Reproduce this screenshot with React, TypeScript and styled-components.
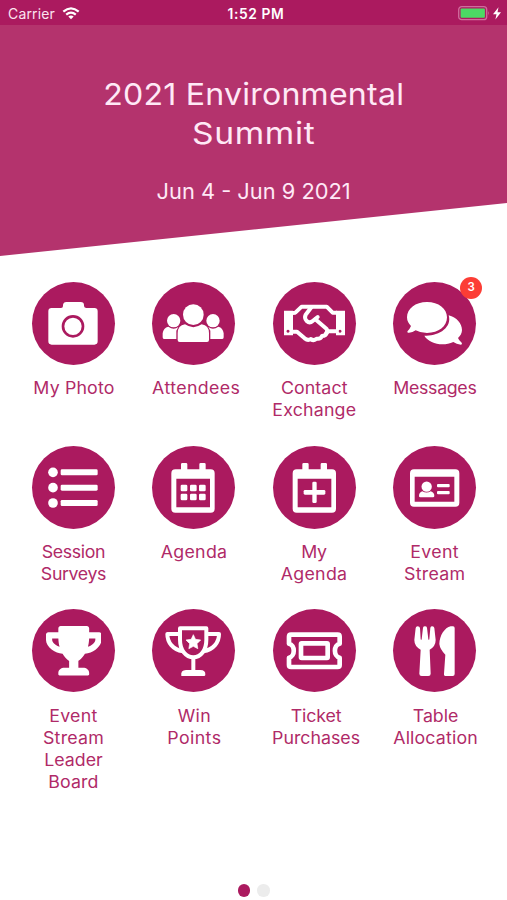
import React from "react";
import styled, { createGlobalStyle } from "styled-components";
import { FaTrophy } from "react-icons/fa";

const brand = "#ab1a5f";

const GlobalStyle = createGlobalStyle`
  * { box-sizing: border-box; }
  body { margin: 0; background: #fff; font-family: Inter, "Open Sans", sans-serif; }
`;

const Screen = styled.div`
  display: flex;
  flex-direction: column;
  width: 507px;
  height: 900px;
  overflow: hidden;
  background: #fff;
`;

const StatusBar = styled.header`
  display: grid;
  grid-template-columns: 1fr auto 1fr;
  align-items: center;
  height: 25px;
  padding: 2px 5px 0 8px;
  background: ${brand};
  color: #fbe4f0;
`;

const Carrier = styled.div`
  display: flex;
  align-items: center;
  gap: 7px;
  font-size: 14px;
  letter-spacing: 0.15px;
`;

const Clock = styled.div`
  padding-left: 2px;
  font-size: 13.8px;
  font-weight: 600;
  letter-spacing: 0.6px;
  color: #fff;
`;

const Power = styled.div`
  display: flex;
  justify-content: flex-end;
`;

const Hero = styled.section`
  display: flex;
  flex-direction: column;
  align-items: center;
  height: 231px;
  padding-top: 50px;
  background: #b4336d;
  color: #ffe9f6;
  clip-path: polygon(0 0, 100% 0, 100% 178px, 0 100%);
`;

const Title = styled.h1`
  margin: 0;
  font-size: 30px;
  font-weight: 400;
  line-height: 39px;
  text-align: center;
`;

const Dates = styled.p`
  margin: 24px 0 0;
  font-size: 21.5px;
  line-height: 28px;
`;

const Line = styled.span<{ $spacing: number; $stretch?: number }>`
  display: block;
  white-space: nowrap;
  letter-spacing: ${(p) => p.$spacing}px;
  transform: scaleX(${(p) => p.$stretch ?? 1.07});
`;

const Grid = styled.main`
  display: grid;
  grid-template-columns: repeat(4, 120.4px);
  grid-template-rows: 163.7px 163.7px auto;
  justify-content: center;
  padding: 26px 0 0 1px;
  flex: 1;
`;

const Tile = styled.div`
  display: flex;
  flex-direction: column;
  align-items: center;
`;

const Disc = styled.div`
  position: relative;
  display: flex;
  align-items: center;
  justify-content: center;
  width: 83px;
  height: 83px;
  border-radius: 50%;
  background: ${brand};
  color: #fff;
`;

const TrophyIcon = styled(FaTrophy)`
  width: 55.5px;
  height: 49.5px;
`;

const Badge = styled.span`
  position: absolute;
  top: -5px;
  right: -6px;
  width: 22px;
  height: 22px;
  border-radius: 50%;
  background: #fc3d35;
  color: #fff;
  font-size: 11.5px;
  font-weight: 600;
  line-height: 20px;
  text-align: center;
`;

const Label = styled.div<{ $indent?: number }>`
  margin-top: 12.4px;
  padding-left: ${(p) => p.$indent ?? 0}px;
  font-size: 16.6px;
  line-height: 22px;
  text-align: center;
  color: #b02a68;
`;

const Pager = styled.footer`
  display: flex;
  justify-content: center;
  gap: 7px;
  height: 16px;
`;

const Dot = styled.i<{ $active?: boolean }>`
  width: 12.5px;
  height: 12.5px;
  border-radius: 50%;
  background: ${(p) => (p.$active ? brand : "#ececec")};
`;

const Glyph = ({ box, children }: { box: string; children: React.ReactNode }) => (
  <svg width="83" height="83" viewBox={`${box} 249 249`} fill="#fff" stroke="none">
    {children}
  </svg>
);

const Camera = () => (
  <Glyph box="36 36">
    <path d="M95 114H123Q129 114 129 108V105Q130 96 139 96H182Q192 96 192 105V108Q193 114 199 114H223Q233 114 233 124V214Q233 224 223 224H95Q85 224 85 214V124Q85 114 95 114Z" />
    <circle cx="159" cy="169" r="30" fill="none" stroke={brand} strokeWidth="8" />
  </Glyph>
);

const People = () => (
  <Glyph box="397 36">
    <circle cx="462" cy="152" r="20" />
    <circle cx="580" cy="152" r="20" />
    <path d="M446 170Q462 182 476 171L470 182V207H433Q429 207 429 202V190Q431 173 446 170Z" />
    <path d="M596 170Q580 182 566 171L572 182V207H608Q612 207 612 202V190Q610 173 596 170Z" />
    <circle cx="521" cy="134" r="31" />
    <path d="M496 163Q521 180 546 163Q568 166 568 190V210Q568 216 562 216H480Q474 216 474 210V190Q474 166 496 163Z" />
  </Glyph>
);

const Handshake = () => (
  <Glyph box="38 36">
    <path fillRule="evenodd" d="M71 122H98V196H71ZM83 179A4.500 4.500 0 1 0 83.100 179Z" />
    <path fillRule="evenodd" d="M227 122H254V196H227ZM239 179A4.500 4.500 0 1 0 239.100 179Z" />
    <g fill="none" stroke="#fff" strokeWidth="12" strokeLinejoin="round" strokeLinecap="round">
      <path d="M96 129L105 128L124 110H199L217 128H229" />
      <path d="M96 185H110L133 205Q143 213 151 207Q161 214 169 206Q181 208 185 198Q197 198 199 187L204 184H229" />
      <path d="M153 112L136 134Q131 144 139 153Q148 161 157 153L172 141" />
      <path d="M165 148L199 177Q204 185 196 193" />
    </g>
  </Glyph>
);

const Bubbles = () => (
  <Glyph box="399 36">
    <path d="M566 136C590 142 606 161 606 180C606 190 601 198 594 204Q597 212 605 218Q608 223 603 224Q589 223 580 216C547 231 507 220 493 197C535 200 577 173 566 136Z" />
    <path d="M501 96C536 96 561 116 561 142C561 169 536 189 501 189Q481 189 467 181Q457 189 444 188Q440 187 443 183Q450 176 453 168Q441 156 441 142C441 116 466 96 501 96Z" />
  </Glyph>
);

const ListIcon = () => (
  <Glyph box="36 31">
    {[110, 156, 202].map((y) => (
      <React.Fragment key={y}>
        <circle cx="99" cy={y} r="14.5" />
        <rect x="122" y={y - 9} width="111" height="18" rx="4" />
      </React.Fragment>
    ))}
  </Glyph>
);

const CalendarFrame = () => (
  <path
    fillRule="evenodd"
    d="M467 101H484V86Q484 82 488 82H499Q503 82 503 86V101H539V86Q539 82 543 82H554Q558 82 558 86V101H573Q585 101 585 113V219Q585 231 573 231H467Q455 231 455 219V113Q455 101 467 101ZM470 129V215H571V129Z"
  />
);

const Agenda = () => (
  <Glyph box="397 31">
    <CalendarFrame />
    {[147, 174].map((y) =>
      [483, 511, 538].map((x) => <rect key={`${x}-${y}`} x={x} y={y} width="20" height="20" rx="4" />)
    )}
  </Glyph>
);

const MyAgenda = () => (
  <Glyph box="396 31">
    <CalendarFrame />
    <rect x="514" y="138" width="13" height="64" rx="4" />
    <rect x="488" y="163" width="65" height="14" rx="4" />
  </Glyph>
);

const IdCard = () => (
  <Glyph box="399 31">
    <path
      fillRule="evenodd"
      d="M462 101H586Q598 101 598 113V201Q598 213 586 213H462Q450 213 450 201V113Q450 101 462 101ZM464 123V198H583V123Z"
    />
    <circle cx="500" cy="153" r="15.5" />
    <path d="M487 167Q500 174 512 167Q523 170 523 181Q523 185 519 185H481Q477 185 477 181Q477 170 487 167Z" />
    <rect x="531" y="145" width="38" height="10" rx="3" />
    <rect x="531" y="166" width="38" height="10" rx="3" />
  </Glyph>
);

const StarCup = () => (
  <Glyph box="397 27">
    <g fill="none" stroke="#fff" strokeWidth="12" strokeLinejoin="round">
      <path d="M481 85H560V119C560 151 543 172 521 172C499 172 481 151 481 119Z" />
      <path d="M479 102H443C443 127 459 149 490 154M562 102H598C598 127 582 149 551 154" />
      <path d="M521 172V214" />
    </g>
    <path d="M485 228Q482 210 499 210H542Q558 210 557 224Q557 228 553 228Z" />
    <path d="M521 104L527.5 118L543 120L532 131L534.500 146L521 139L507.500 146L510 131L499 120L514.500 118Z" strokeLinejoin="round" stroke="#fff" strokeWidth="2" />
  </Glyph>
);

const Ticket = () => (
  <Glyph box="38 27">
    <g fill="none" stroke="#fff" strokeWidth="14" strokeLinejoin="round">
      <path d="M92 104H232Q238 104 238 110V131C219 135 219 169 238 173V195Q238 201 232 201H92Q86 201 86 195V173C105 169 105 135 86 131V110Q86 104 92 104Z" />
      <rect x="122" y="130" width="80" height="44" rx="2" />
    </g>
  </Glyph>
);

const Cutlery = () => (
  <Glyph box="399 27">
    <path d="M467 84Q468 79 473 79Q479 79 480 84L482 118Q484 121 485 118L489 83Q490 79 495 79Q500 79 501 83L505 118Q506 121 508 118L511 83Q512 79 517 79Q522 79 523 84L527 120Q527 139 509 149L512 221Q512 228 505 228H485Q478 228 478 221L482 149Q463 139 463 120Z" />
    <path d="M572 79H579Q584 79 584 84V222Q584 228 578 228H558Q551 228 552 221L556 164Q540 148 538 132C539 106 554 83 572 79Z" />
  </Glyph>
);

type Item = {
  icon: React.ReactNode;
  lines: [text: string, spacing: number][];
  indent?: number;
  badge?: string;
};

const items: Item[] = [
  { icon: <Camera />, lines: [["My Photo", 0.15]], indent: 1 },
  { icon: <People />, lines: [["Attendees", 0.35]], indent: 4 },
  { icon: <Handshake />, lines: [["Contact", 0.1], ["Exchange", 0.2]], indent: 1 },
  { icon: <Bubbles />, lines: [["Messages", -0.3]], badge: "3" },
  { icon: <ListIcon />, lines: [["Session", -0.35], ["Surveys", -0.35]] },
  { icon: <Agenda />, lines: [["Agenda", 0.25]] },
  { icon: <MyAgenda />, lines: [["My", -0.3], ["Agenda", 0.25]] },
  { icon: <IdCard />, lines: [["Event", 0.3], ["Stream", 0.25]] },
  { icon: <TrophyIcon />, lines: [["Event", 0.3], ["Stream", 0.2], ["Leader", 0], ["Board", 0.1]] },
  { icon: <StarCup />, lines: [["Win", 0.3], ["Points", 0.4]], indent: 1 },
  { icon: <Ticket />, lines: [["Ticket", -0.1], ["Purchases", 0]], indent: 3 },
  { icon: <Cutlery />, lines: [["Table", 0], ["Allocation", 0.15]], indent: 2 },
];

export default function App() {
  return (
    <Screen>
      <GlobalStyle />
      <StatusBar>
        <Carrier>
          Carrier
          <svg width="18" height="13" viewBox="0 0 18 13" fill="none" stroke="#fff" strokeWidth="2.2">
            <path d="M1.300 4.600Q9 -2 16.700 4.600M4.200 7.700Q9 3.600 13.800 7.700" />
            <path d="M6.300 9.500Q9 7.400 11.700 9.500L9 12.300Z" fill="#fff" stroke="none" />
          </svg>
        </Carrier>
        <Clock>1:52 PM</Clock>
        <Power>
          <svg width="44" height="15" viewBox="0 0 44 15">
            <rect x="0.700" y="0.700" width="28" height="13" rx="3" fill="none" stroke="#cf6d9d" strokeWidth="1.300" />
            <rect x="2.600" y="2.600" width="24.300" height="9.200" rx="1" fill="#4cd964" />
            <path d="M30.300 5Q32 7.200 30.300 9.500Z" fill="#cf6d9d" />
            <path d="M40.500 1.200L35 8.200H38.500L37.400 13.400L43 6.200H39.500Z" fill="#fff" />
          </svg>
        </Power>
      </StatusBar>
      <Hero>
        <Title>
          <Line $spacing={0.2}>2021 Environmental</Line>
          <Line $spacing={0.6} $stretch={1.12}>Summit</Line>
        </Title>
        <Dates>
          <Line $spacing={0} $stretch={1.015}>Jun 4 - Jun 9 2021</Line>
        </Dates>
      </Hero>
      <Grid>
        {items.map((item, i) => (
          <Tile key={i}>
            <Disc>
              {item.icon}
              {item.badge && <Badge>{item.badge}</Badge>}
            </Disc>
            <Label $indent={item.indent}>
              {item.lines.map(([text, spacing]) => (
                <Line key={text} $spacing={spacing}>{text}</Line>
              ))}
            </Label>
          </Tile>
        ))}
      </Grid>
      <Pager>
        <Dot $active />
        <Dot />
      </Pager>
    </Screen>
  );
}
